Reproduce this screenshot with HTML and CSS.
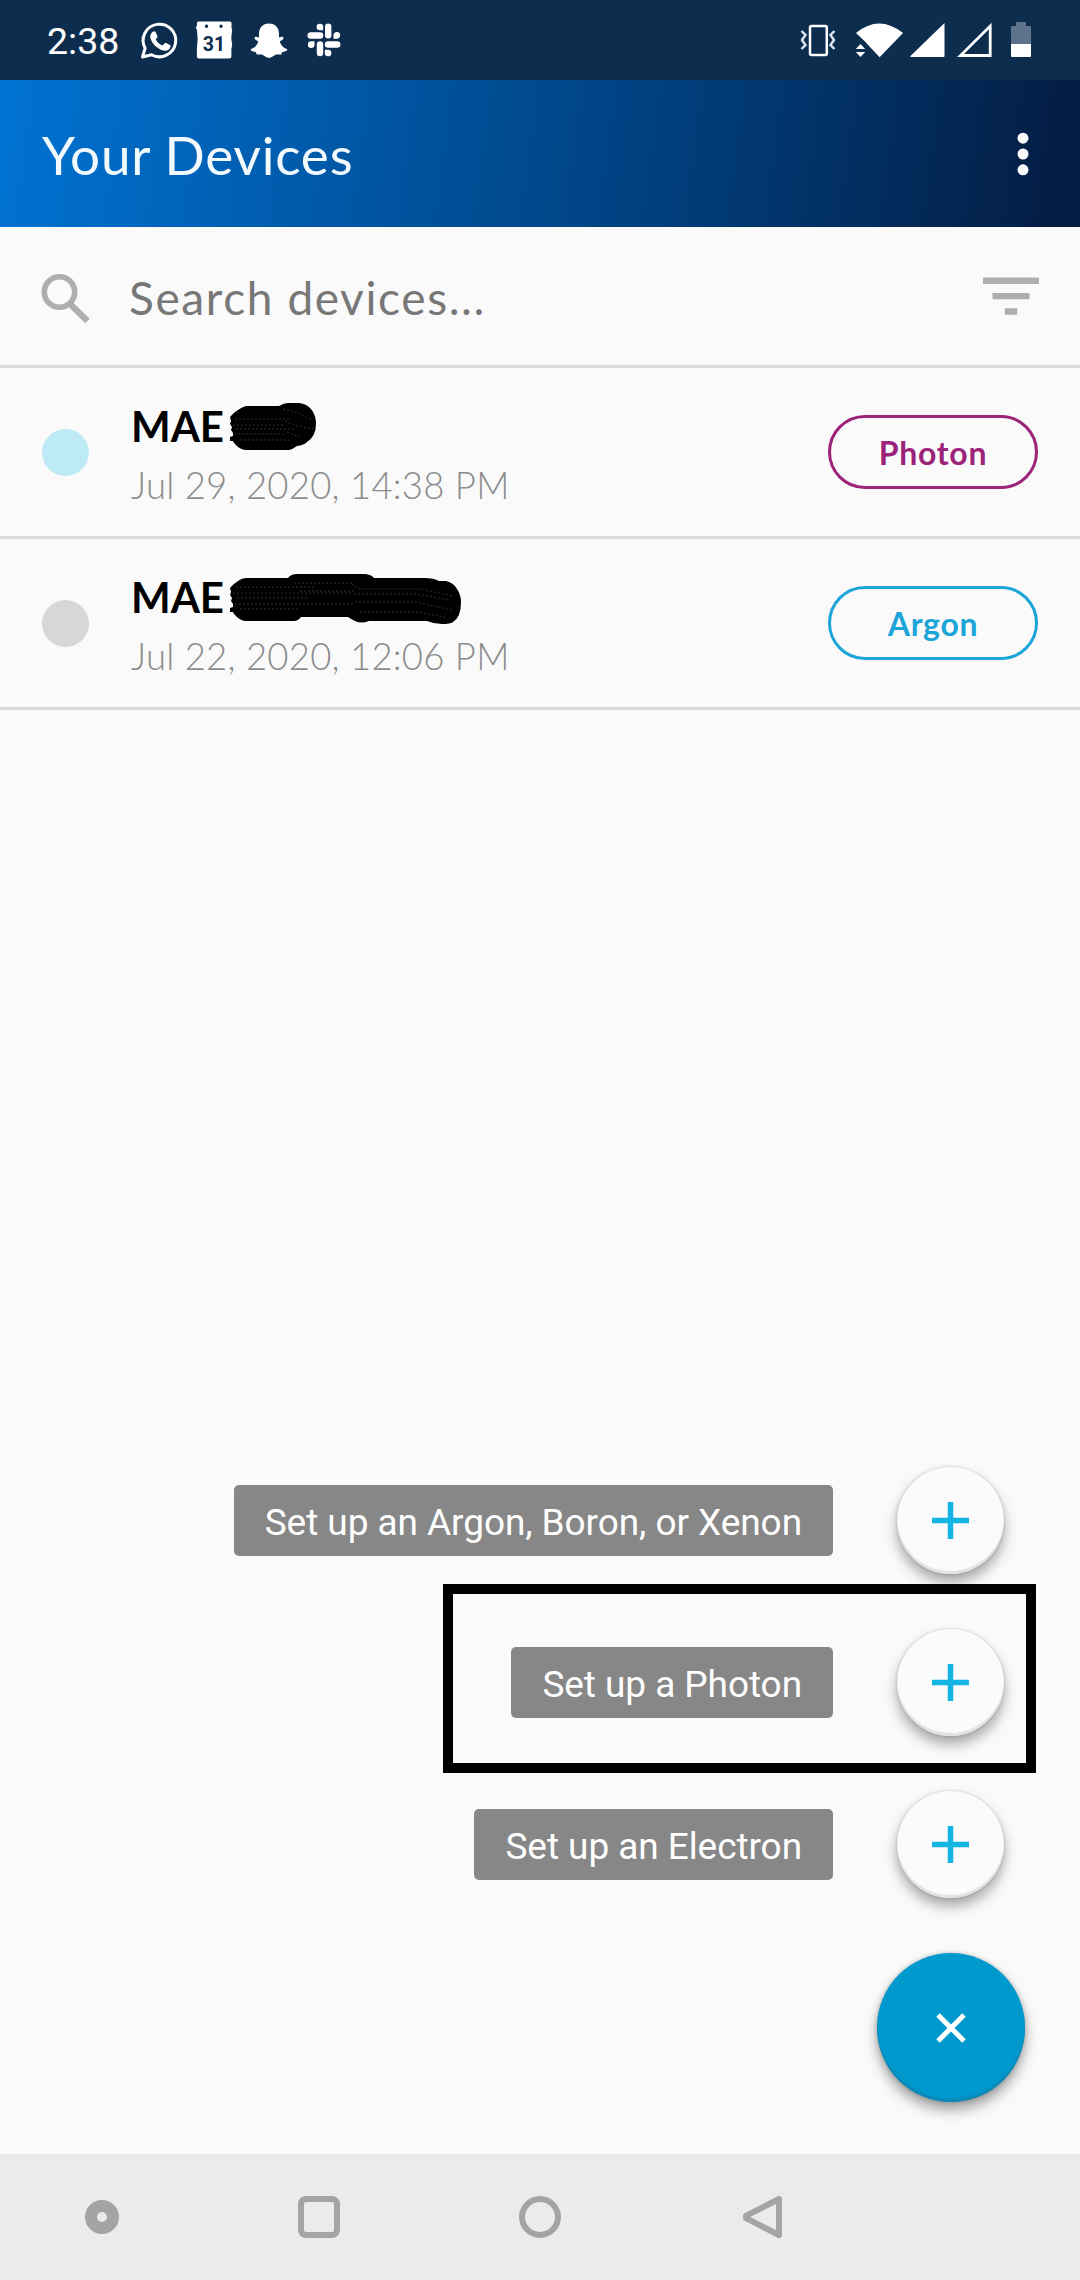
FILE: index.html
```html
<!DOCTYPE html>
<html lang="en">
<head>
<meta charset="utf-8">
<title>Your Devices</title>
<link rel="stylesheet" href="styles.css">
</head>
<body>
<div class="screen">
  <div class="status-bar">
    <span class="time">2:38</span>
    <svg class="notifications" width="200" height="40" viewBox="140 20 200 40" fill="#fff">
      <path d="M142.500 57l2.600-8.800a16.300 16.300 0 1 1 6.400 6.500z" fill="none" stroke="#fff" stroke-width="3" stroke-linejoin="round"/>
      <path d="M152.500 32c1-1 2.600-1 3.200.2l1.700 3.800c.3.700 0 1.300-.4 1.800l-1.300 1.600c1.800 3 3.700 4.800 6.900 6.200l1.900-2.200c.5-.6 1-.6 1.600-.3l3.800 1.900c.8.400.7 1 .5 2-.4 2.100-3 3.800-5 3.800-5.800-.2-13.700-6.400-15.200-13.600-.2-2 .9-4.100 2.300-5.200z"/>
      <path fill-rule="evenodd" d="M198.500 21.500h31.500q1.500 0 1.500 1.500v5l.7 1.500q-1.700 8 0 16l-.8 3v8q0 2-2 2h-30.500q-2 0-2-2v-8q1.500-10 0-19l-.9-1v-2h.9v-3q0-2 1.600-2zM206.500 24.500a1.700 1.700 0 1 0 .1 0zM221 24.500a1.700 1.700 0 1 0 .1 0z"/>
      <text x="202.800" y="50.500" class="calendar-day">31</text>
      <path d="M269 23.500c6.500 0 10 4.500 10 10.500v3.500l2.500-.8c1.800-.4 2.700 1.500 1.300 2.700l-3.100 2c1.300 3.600 3 6 7 7.600 1 .5.600 1.600-.5 2.100l-4.200 1.200-.7 2.200-4.800-.1c-2.500.4-4 3.300-7.500 3.300s-5-2.900-7.500-3.300l-4.800.1-.7-2.200-4.200-1.200c-1.100-.5-1.500-1.600-.5-2.100 4-1.600 5.700-4 7-7.600l-3.100-2c-1.400-1.200-.5-3.100 1.300-2.700l2.500.8V34c0-6 3.500-10.500 10-10.500z"/>
      <rect x="325" y="23.500" width="6.400" height="15" rx="3.200"/>
      <path d="M323.200 30.300v-3.300a3.300 3.300 0 1 0-3.300 3.300z"/>
      <rect x="307.500" y="32.300" width="15.800" height="6.400" rx="3.200"/>
      <path d="M333.500 38.700v-3.200a3.300 3.300 0 1 1 3.300 3.200z"/>
      <rect x="324.800" y="41.300" width="15.600" height="6.400" rx="3.200"/>
      <path d="M314.500 41.300v3.200a3.300 3.300 0 1 1-3.300-3.200z"/>
      <rect x="316.800" y="41.300" width="6.400" height="15" rx="3.200"/>
      <path d="M324.800 49.700h3.200a3.300 3.300 0 1 1-3.200 3.300z"/>
    </svg>
    <svg class="system" width="232" height="40" viewBox="800 20 232 40" fill="#fff">
      <rect x="810" y="26" width="16.800" height="29" rx="1.500" fill="none" stroke="#fff" stroke-width="2.500"/>
      <path d="M801.500 31l4 4-3.500 5 3.500 5-4 4M834.500 31l-4 4 3.500 5-3.500 5 4 4" fill="none" stroke="#dfe6ee" stroke-width="2.400"/>
      <path d="M856 33q23-19 47 0L879.600 57.300l-13.600-14.500v-.3z"/>
      <path d="M855.800 49l4.700-5 4.700 5zM855.800 52l4.700 5 4.700-5z"/>
      <path d="M944.500 23v33q0 1-1 1h-32q-2 0-1-1z"/>
      <path d="M990.200 26v29.500h-29.700z" fill="none" stroke="#fff" stroke-width="2.800"/>
      <path d="M1011 44V27q0-1 1-1h4v-4h10v4h4q1 0 1 1v17z" fill="#5e738b"/>
      <path d="M1011 44h20v12q0 1-1 1h-18q-1 0-1-1z"/>
    </svg>
  </div>

  <header class="app-bar">
    <h1 class="title">Your Devices</h1>
    <svg class="more" width="12" height="44" viewBox="0 0 12 44" fill="#fff">
      <circle cx="6" cy="6.200" r="5.500"/><circle cx="6" cy="22" r="5.500"/><circle cx="6" cy="37.800" r="5.500"/>
    </svg>
  </header>

  <div class="search">
    <svg width="50" height="50" viewBox="0 0 50 50" fill="none" stroke="#aeaeae">
      <circle cx="18.500" cy="19" r="15.200" stroke-width="5.600"/>
      <path d="M30 32L46.500 48" stroke-width="6.400"/>
    </svg>
    <span class="placeholder">Search devices...</span>
    <svg class="filter" width="56" height="39" viewBox="0 1 56 39" fill="#aeaeae">
      <path d="M0 .500h56v6.500H0zM9.500 16h37v6.300h-37zM21.700 31.300h12.600v6.500H21.700z"/>
    </svg>
  </div>

  <main class="devices">
    <div class="device">
      <span class="dot dot-online"></span>
      <div class="info">
        <div class="name">
          <span class="name-text">MAE</span>
          <svg class="scribble" width="90" height="60" viewBox="229 395 90 60">
            <path d="M230 441v-4l3-1v-3l-2-3 1-3-2-3 1-3-1-4q3-4 8-7 4-3 8-4h33q5-3 9-3h11q8 1 12 6 5 6 5 15 0 12-9 18-3 3-10 4-4 3-8 4h-44q-6-1-10-6-2-2-2-3z"/>
            <path class="grain" d="M235 419h55M233 425h50M236 429h58M234 434h50M240 440h50M283 409l15 4 14 7M285 421l12 5 17 3M287 432l13 5"/>
          </svg>
        </div>
        <div class="date">Jul 29, 2020, 14:38 PM</div>
      </div>
      <span class="pill pill-photon">Photon</span>
    </div>
    <div class="device">
      <span class="dot dot-offline"></span>
      <div class="info">
        <div class="name">
          <span class="name-text">MAE</span>
          <svg class="scribble" width="233" height="60" viewBox="229 566 233 60">
            <path d="M230 612v-4l3-1v-3l-2-3 1-3-2-3 1-3-1-4q3-4 8-7 4-3 8-3h42q3-4 9-4h69q6 1 8 4h50q10 0 15 3h7q8 2 11 8 4 6 4 13 0 15-8 20-3 2-11 2-8 0-15-3h-58q-8 3-14 0-4-2-7-4h-47q-3 4-7 4h-49q-6-1-10-6-2-2-2-3z"/>
            <path class="grain" d="M236 587h80M233 593h120M237 598h70M235 604h120M240 609h60M294 583h58M300 591h55M352 584l8 5h61l32 7M354 594h62l34 6M355 602h61l36 8M360 612h57l28 5"/>
          </svg>
        </div>
        <div class="date">Jul 22, 2020, 12:06 PM</div>
      </div>
      <span class="pill pill-argon">Argon</span>
    </div>
  </main>

  <div class="fab-menu">
    <div class="fab-row">
      <span class="fab-label">Set up an Argon, Boron, or Xenon</span>
      <span class="fab-mini"><svg width="37" height="37" viewBox="0 0 37 37"><path d="M18.500 0v37M0 18.500h37"/></svg></span>
    </div>
    <div class="fab-row highlighted">
      <span class="fab-label">Set up a Photon</span>
      <span class="fab-mini"><svg width="37" height="37" viewBox="0 0 37 37"><path d="M18.500 0v37M0 18.500h37"/></svg></span>
    </div>
    <div class="fab-row">
      <span class="fab-label">Set up an Electron</span>
      <span class="fab-mini"><svg width="37" height="37" viewBox="0 0 37 37"><path d="M18.500 0v37M0 18.500h37"/></svg></span>
    </div>
    <span class="fab"><svg width="30" height="30" viewBox="0 0 30 30"><path d="M2 2l26 26M28 2L2 28"/></svg></span>
  </div>

  <nav class="nav-bar">
    <svg width="42" height="42" viewBox="0 0 42 42"><circle cx="21" cy="21" r="11" stroke-width="12"/></svg>
    <svg width="42" height="42" viewBox="0 0 42 42"><rect x="1" y="3" width="36" height="36" rx="5"/></svg>
    <svg width="42" height="42" viewBox="0 0 42 42"><circle cx="21" cy="21" r="18"/></svg>
    <svg width="42" height="42" viewBox="0 0 42 42"><path d="M41 3v36L8 22.200v-2.400z" stroke-linejoin="round"/></svg>
  </nav>
</div>
</body>
</html>
```
FILE: styles.css
```css
* { box-sizing: border-box; }
body { margin: 0; }
svg { display: block; flex: none; overflow: visible; }

.screen {
  position: relative;
  display: flex;
  flex-direction: column;
  width: 1080px;
  height: 2280px;
  overflow: hidden;
  background: #fafafa;
  font-family: Lato, sans-serif;
}

.status-bar {
  display: flex;
  align-items: center;
  height: 80px;
  padding: 0 48px 0 47px;
  background: #0d2d4e;
}
.time {
  width: 93px;
  padding-top: 1px;
  color: #fff;
  font: 37.5px/40px Roboto, sans-serif;
}
.calendar-day {
  fill: #0d2d4e;
  font: 700 19.5px Roboto, sans-serif;
}
.system { margin-left: auto; }

.app-bar {
  display: flex;
  align-items: center;
  justify-content: space-between;
  height: 147px;
  padding: 0 51px 0 42px;
  background: linear-gradient(98deg, #0073d3 0%, #00407f 60%, #041b40 100%);
}
.title {
  margin: 0;
  padding-top: 2px;
  color: #f2faff;
  font-size: 53px;
  font-weight: 400;
  line-height: 145px;
  letter-spacing: .8px;
}

.search {
  display: flex;
  align-items: center;
  height: 141px;
  padding: 3px 41px 0 41px;
  border-bottom: 3px solid #dadada;
}
.placeholder {
  flex: 1;
  margin-left: 38px;
  color: #777;
  font-size: 46px;
  line-height: 60px;
  letter-spacing: 1.6px;
}

.device {
  display: flex;
  align-items: center;
  height: 171px;
  padding: 0 42px;
  border-bottom: 3px solid #dadada;
}
.dot {
  width: 47px;
  height: 47px;
  border-radius: 50%;
}
.dot-online { background: #bdeaf5; }
.dot-offline { background: #d9d7d6; }
.info {
  flex: 1;
  margin-left: 42px;
  padding-top: 6px;
  line-height: 60px;
}
.name {
  display: flex;
  height: 60px;
  color: #000;
  font-size: 42px;
  font-weight: 700;
  line-height: 62px;
}
.name-text { width: 98px; }
.date {
  color: #8c8c8c;
  font-size: 36.5px;
  font-weight: 300;
  letter-spacing: .25px;
  white-space: nowrap;
}
.grain {
  fill: none;
  stroke: #303030;
  stroke-width: 1;
  stroke-dasharray: 2 2;
}
.pill {
  width: 210px;
  height: 74px;
  padding-top: 1px;
  border: 3px solid;
  border-radius: 37px;
  font-size: 32px;
  font-weight: 700;
  line-height: 68px;
  letter-spacing: .7px;
  text-align: center;
}
.pill-photon { color: #9b2379; }
.pill-argon { color: #1ca5d8; }

/* Floating over the list, anchored to the bottom right corner */
.fab-menu {
  position: absolute;
  right: 55px;
  bottom: 178px;
  display: flex;
  flex-direction: column;
  align-items: flex-end;
  gap: 55px;
}
.fab-row {
  position: relative;
  display: flex;
  align-items: center;
  gap: 64px;
  margin-right: 21px;
}
.fab-label {
  height: 71px;
  padding: 2px 31px 0;
  border-radius: 5px;
  background: #878787;
  color: #fff;
  font: 37px/71px Roboto, sans-serif;
  letter-spacing: -.07px;
}
.fab-mini,
.fab {
  display: flex;
  align-items: center;
  justify-content: center;
  border-radius: 50%;
}
.fab-mini {
  width: 107px;
  height: 107px;
  background: #fbfbfb;
  box-shadow: inset 0 -3px 1px #e2e2e2, 0 0 3px rgba(0, 0, 0, .18), 0 8px 13px rgba(0, 0, 0, .34);
}
.fab-mini path { stroke: #14b5e2; stroke-width: 5.5; }
.fab {
  width: 148px;
  height: 149px;
  background: #0099cd;
  box-shadow: inset 0 -3px 2px #0b87b5, 0 0 4px rgba(0, 0, 0, .2), 0 8px 13px rgba(0, 0, 0, .36);
}
.fab path { stroke: #fff; stroke-width: 5; }
.highlighted::after {
  content: "";
  position: absolute;
  inset: -45px -32px -37px -68px;
  border: 10px solid #000;
}

.nav-bar {
  display: flex;
  align-items: center;
  gap: 177px;
  height: 126px;
  margin-top: auto;
  padding-left: 81px;
  background: #ebebeb;
}
.nav-bar svg { fill: none; stroke: #a4a4a4; stroke-width: 6; }
```
